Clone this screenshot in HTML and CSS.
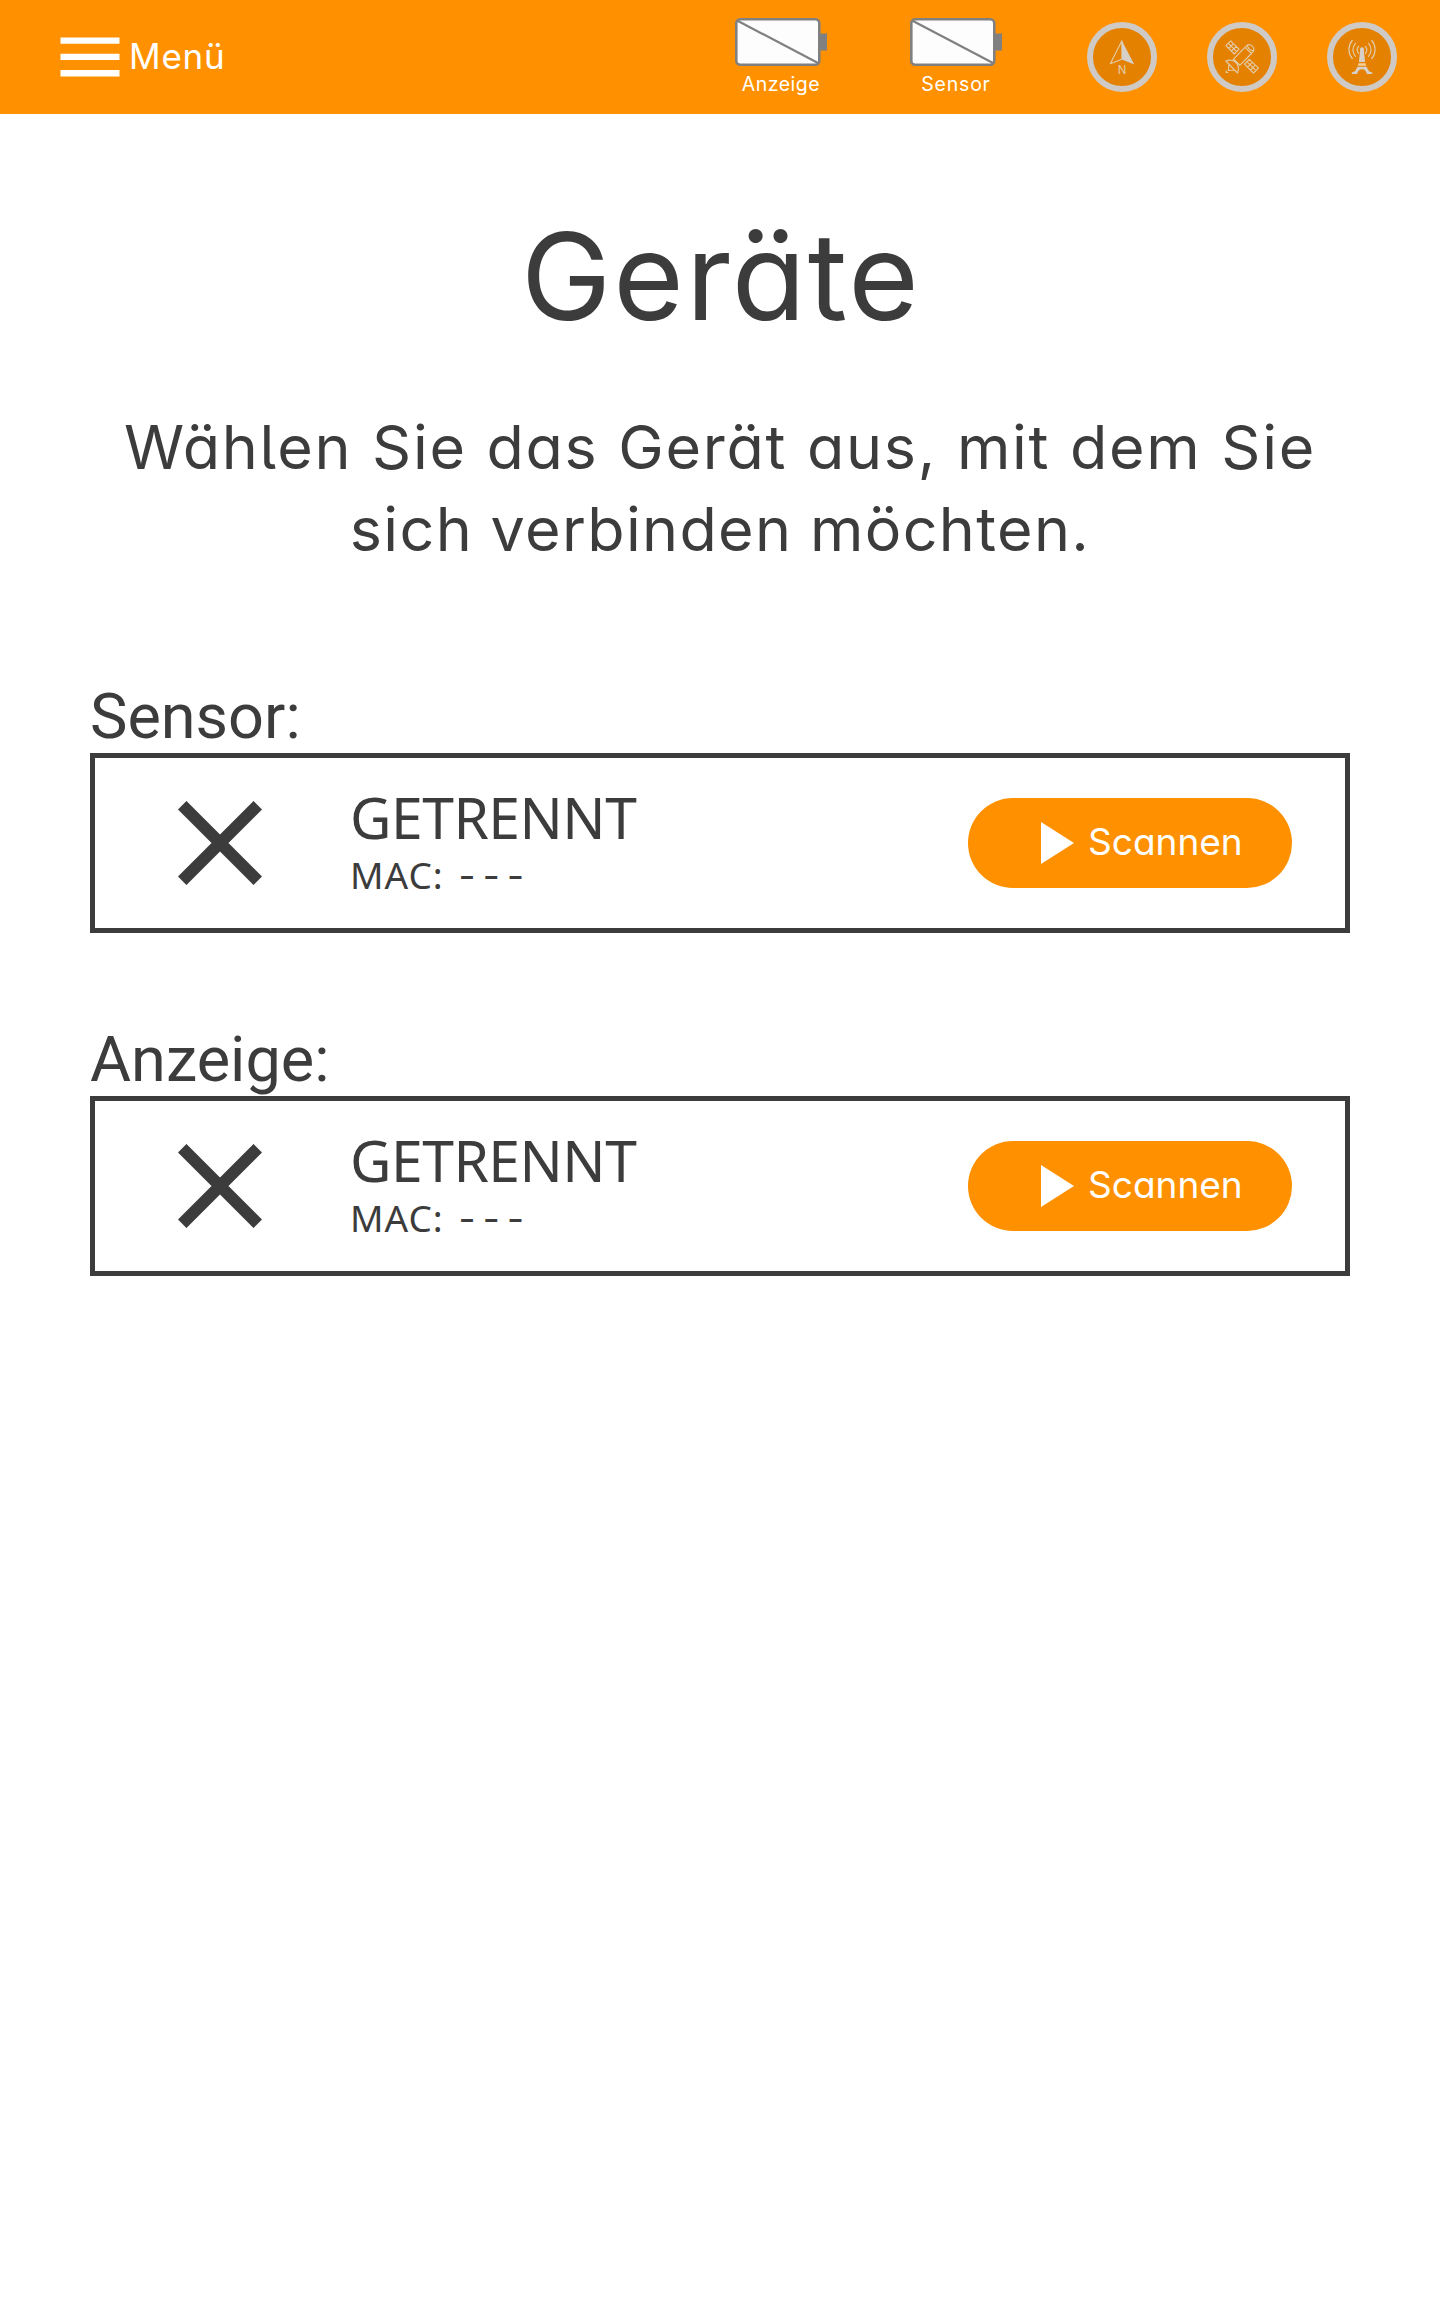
FILE: index.html
```
<!DOCTYPE html>
<html lang="de">
<head>
<meta charset="utf-8">
<title>Geräte</title>
<link rel="stylesheet" href="styles.css">
</head>
<body>
<header class="topbar">
  <div class="menu">
    <svg class="menu-icon" width="60" height="40" viewBox="0 0 60 40"><path d="M.5 .5h59v6.3H.5zM.5 16.8h59v6.3H.5zM.5 33.1h59v6.3H.5z" fill="#fff"/></svg>
    <span class="menu-label">Menü</span>
  </div>
  <div class="batteries">
    <div class="battery">
      <svg width="92" height="48" viewBox="0 0 92 48"><rect x="84" y="15.5" width="8" height="17" fill="#808080"/><rect x="1.3" y="1.3" width="83" height="45.4" rx="4" fill="#fdfdfd" stroke="#808080" stroke-width="2.6"/><path d="M3 3l80 42" stroke="#808080" stroke-width="2.2"/></svg>
      <span class="battery-label">Anzeige</span>
    </div>
    <div class="battery">
      <svg width="92" height="48" viewBox="0 0 92 48"><rect x="84" y="15.5" width="8" height="17" fill="#808080"/><rect x="1.3" y="1.3" width="83" height="45.4" rx="4" fill="#fdfdfd" stroke="#808080" stroke-width="2.6"/><path d="M3 3l80 42" stroke="#808080" stroke-width="2.2"/></svg>
      <span class="battery-label sensor-label">Sensor</span>
    </div>
  </div>
  <div class="signals">
    <svg class="signal" viewBox="0 0 70 70"><circle cx="35" cy="35" r="32" class="ring"/>
      <path class="line" d="M34.9 18.8L23.3 41.7l11.6-4.4z"/><path class="solid" d="M34.7 18.2L47.2 42.5l-12.3-5z"/>
      <text x="35" y="51.8" class="north">N</text></svg>
    <svg class="signal" viewBox="0 0 70 70"><circle cx="35" cy="35" r="32" class="ring"/>
      <g class="line">
        <path d="M26.3 37.3L38 25.3l6.5 6.2L33 43.2z"/>
        <path d="M38.5 25l2.3-2.2c3-1 6.8 2 6 6l-2.3 2.4M40.5 23.3c.3 3 2.5 5.3 6 5.5"/>
        <path d="M23.7 18.9l-4.8 4.8 8.3 8.3 4.8-4.8zM21.3 21.3l8.3 8.3M26.5 21.7l-4.8 4.8M29.2 24.4l-4.8 4.8"/>
        <path d="M42.3 37.3l-4.8 4.8 9 8.9 4.9-4.8zM39.9 39.7l9 8.9M45.3 40.3l-4.8 4.8M48.3 43.2l-4.8 4.8"/>
        <path d="M26.5 37.5c2 1 4 3 4.7 5.2M18.8 39c4-1.5 8-.8 10.2 1.7 2.4 2.5 3 6.5 1.5 10.3zM22 42.5l-.7 6 6.5-.5M19.2 48.5v2h2"/>
      </g></svg>
    <svg class="signal" viewBox="0 0 70 70"><circle cx="35" cy="35" r="32" class="ring"/>
      <g class="wave"><path d="M31.6 24.3a5 5 0 0 0 0 7M28.5 21.3a9.5 9.5 0 0 0 0 13M25.2 18.5a14 14 0 0 0 0 18M38.4 24.3a5 5 0 0 1 0 7M41.5 21.3a9.5 9.5 0 0 1 0 13M44.8 18.5a14 14 0 0 1 0 18"/></g>
      <circle cx="35" cy="27.3" r="2" class="solid"/>
      <path class="solid" d="M33.2 28h3.6l1.3 12h-6.2z"/>
      <path d="M31.4 41.2h7.2l.5 2.6h-8.2z" fill="#f6cf96"/>
      <path class="solid" d="M30.5 44.8h9l2.5 4.4 3.2 1.2v1.5h-5.4c-.5-2.800-2.200-4.600-4.800-4.600s-4.300 1.800-4.800 4.600h-5.400v-1.500l3.200-1.200z"/></svg>
  </div>
</header>
<main class="content">
  <h1 class="title">Geräte</h1>
  <p class="subtitle"><span class="line-one">Wählen Sie das Gerät aus, mit dem Sie</span><br><span class="line-two">sich verbinden möchten.</span></p>
  <section class="device">
    <h2 class="device-name">Sensor:</h2>
    <div class="card">
      <svg class="cross" width="84" height="84" viewBox="0 0 84 84"><path d="M4.2 4.2l75.6 75.6M79.8 4.2L4.2 79.8"/></svg>
      <div class="info"><div class="state">GETRENNT</div><div class="mac">MAC: <span class="dashes">---</span></div></div>
      <button class="scan"><svg width="33" height="42" viewBox="0 0 33 42"><path d="M0 0l33 21L0 42z" fill="#fff"/></svg><span class="scan-label">Scannen</span></button>
    </div>
  </section>
  <section class="device">
    <h2 class="device-name">Anzeige:</h2>
    <div class="card">
      <svg class="cross" width="84" height="84" viewBox="0 0 84 84"><path d="M4.2 4.2l75.6 75.6M79.8 4.2L4.2 79.8"/></svg>
      <div class="info"><div class="state">GETRENNT</div><div class="mac">MAC: <span class="dashes">---</span></div></div>
      <button class="scan"><svg width="33" height="42" viewBox="0 0 33 42"><path d="M0 0l33 21L0 42z" fill="#fff"/></svg><span class="scan-label">Scannen</span></button>
    </div>
  </section>
</main>
</body>
</html>
```
FILE: styles.css
```
* { box-sizing: border-box; }
body {
  margin: 0;
  min-height: 2304px;
  background: #fff;
  color: #3c3c3c;
  font-family: Inter, "Noto Sans", sans-serif;
  font-feature-settings: "cv11", "cv05";
}
svg { display: block; flex: none; }
.topbar {
  display: flex;
  height: 114px;
  padding: 0 43px 0 60px;
  background: #ff9100;
  color: #fff;
}
.menu { display: flex; align-items: center; gap: 9px; }
.menu-label { padding-bottom: 2px; font-size: 35px; line-height: 44px; letter-spacing: .8px; }
.batteries { display: flex; gap: 83px; margin-left: auto; padding-top: 18px; }
.battery { display: flex; flex-direction: column; align-items: center; gap: 6px; width: 92px; }
.battery-label { font-size: 19.5px; line-height: 24px; letter-spacing: .5px; white-space: nowrap; }
.sensor-label { letter-spacing: .8px; }
.signals { display: flex; gap: 50px; margin-left: 85px; padding-top: 22px; }
.signal { width: 70px; height: 70px; }
.ring { fill: #e48100; stroke: #cfcac5; stroke-width: 6; }
.line { fill: none; stroke: #e3cba9; stroke-width: 1.15; stroke-linejoin: round; }
.wave { fill: none; stroke: #e3cba9; stroke-width: 1.2; stroke-linecap: round; }
.solid { fill: #d6d0c8; }
.north { fill: #e3cba9; font-size: 11.5px; text-anchor: middle; }
.content { padding: 92px 90px 0; }
.title {
  margin: 0 0 60px;
  padding-left: 2px;
  font-size: 121px;
  line-height: 140px;
  font-weight: 400;
  letter-spacing: 2.1px;
  text-align: center;
}
.subtitle { margin: 0 0 117px; font-size: 61px; line-height: 82px; text-align: center; white-space: nowrap; }
.line-one { letter-spacing: 1.7px; word-spacing: 1px; }
.line-two { letter-spacing: 1.35px; word-spacing: -1px; }
.device { margin-bottom: 97px; }
.device-name {
  margin: 0;
  padding-bottom: 6px;
  font-family: Roboto, sans-serif;
  font-size: 63px;
  line-height: 60px;
  font-weight: 400;
}
.card {
  display: flex;
  align-items: center;
  height: 180px;
  padding: 0 53px 0 83px;
  border: 5px solid #3c3c3c;
}
.cross path { stroke: #3c3c3c; stroke-width: 12; }
.info {
  display: flex;
  flex-direction: column;
  gap: 6px;
  margin-left: 88px;
  padding-bottom: 2px;
  font-family: "Noto Sans", sans-serif;
  white-space: nowrap;
}
.state { font-size: 57px; line-height: 60px; letter-spacing: -.5px; }
.mac { font-size: 37px; line-height: 44px; letter-spacing: 1px; }
.dashes { margin-left: 4px; font-family: Inter, sans-serif; letter-spacing: 7.3px; line-height: 1; }
.scan {
  display: flex;
  align-items: center;
  gap: 14px;
  width: 324px;
  height: 90px;
  margin-left: auto;
  padding: 0 0 0 73px;
  border: 0;
  border-radius: 45px;
  background: #ff9100;
  color: #fff;
  font: inherit;
  font-feature-settings: inherit;
}
.scan-label { padding-bottom: 2px; font-size: 37px; line-height: 44px; }
```
